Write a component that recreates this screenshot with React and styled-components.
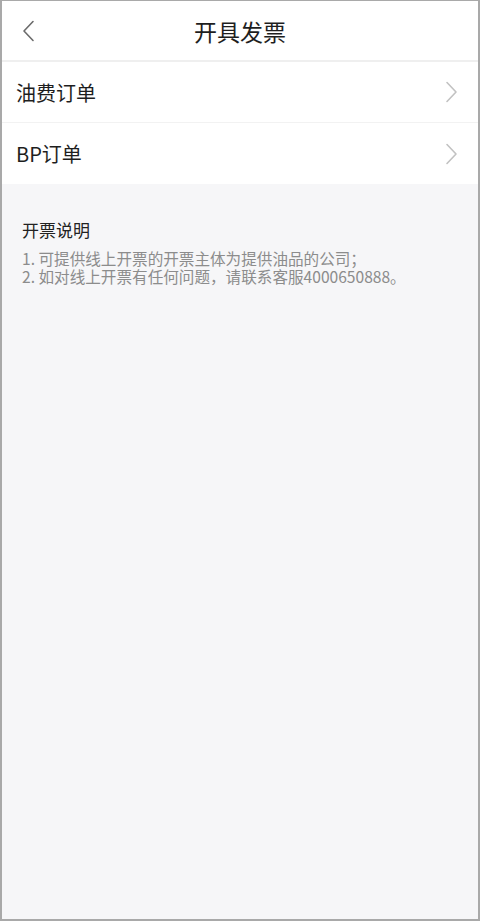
import React from 'react';
import styled, { createGlobalStyle } from 'styled-components';

const GlobalStyle = createGlobalStyle`
  html, body {
    margin: 0;
    padding: 0;
    background: #f6f6f8;
  }
  * {
    box-sizing: border-box;
  }
`;

const Frame = styled.div`
  height: 100vh;
  border: 2px solid #a9a9a9;
  border-top-width: 1px;
  background: #f6f6f8;
  font-family: "Noto Sans CJK SC", "Noto Sans", sans-serif;
  display: flex;
  flex-direction: column;
`;

const Header = styled.header`
  height: 61px;
  background: #fff;
  border-bottom: 2px solid #efefef;
  display: grid;
  grid-template-columns: 60px 1fr 60px;
  align-items: center;
`;

const BackButton = styled.button`
  border: none;
  background: none;
  padding: 0 0 0 20px;
  height: 100%;
  display: flex;
  align-items: center;
  cursor: pointer;
`;

const Title = styled.h1`
  margin: 0;
  text-align: center;
  font-size: 23px;
  font-weight: 400;
  color: #1e1e1e;
`;

const List = styled.div`
  background: #fff;
`;

const Row = styled.div`
  height: 61px;
  padding: 0 20px 0 14px;
  display: flex;
  align-items: center;
  justify-content: space-between;
  border-bottom: ${({ $last }) => ($last ? 'none' : '1px solid #f2f2f2')};
  cursor: pointer;
`;

const RowLabel = styled.span`
  font-size: 20px;
  color: #1e1e1e;
`;

const Notes = styled.section`
  padding: 34px 20px 0 20px;
`;

const NotesTitle = styled.h2`
  margin: 0 0 7px 0;
  font-size: 17px;
  font-weight: 400;
  color: #222;
  line-height: 24px;
`;

const NoteLine = styled.p`
  margin: 0;
  font-size: 15.6px;
  line-height: 18px;
  color: #8c8c8c;
`;

const Chevron = ({ dir = 'right', color, size = 22 }) => (
  <svg width="13" height={size} viewBox="0 0 13 22" fill="none">
    <path
      d={dir === 'left' ? 'M11 1.5 L2 11 L11 20.5' : 'M2 1.5 L11 11 L2 20.5'}
      stroke={color}
      strokeWidth="1.6"
      strokeLinecap="round"
      strokeLinejoin="round"
    />
  </svg>
);

const rows = ['油费订单', 'BP订单'];

export default function App() {
  return (
    <>
      <GlobalStyle />
      <Frame>
        <Header>
          <BackButton>
            <Chevron dir="left" color="#6b6b6b" />
          </BackButton>
          <Title>开具发票</Title>
          <span />
        </Header>
        <List>
          {rows.map((r, i) => (
            <Row key={r} $last={i === rows.length - 1}>
              <RowLabel>{r}</RowLabel>
              <Chevron color="#c2c2c2" />
            </Row>
          ))}
        </List>
        <Notes>
          <NotesTitle>开票说明</NotesTitle>
          <NoteLine>1. 可提供线上开票的开票主体为提供油品的公司；</NoteLine>
          <NoteLine>2. 如对线上开票有任何问题，请联系客服4000650888。</NoteLine>
        </Notes>
      </Frame>
    </>
  );
}
